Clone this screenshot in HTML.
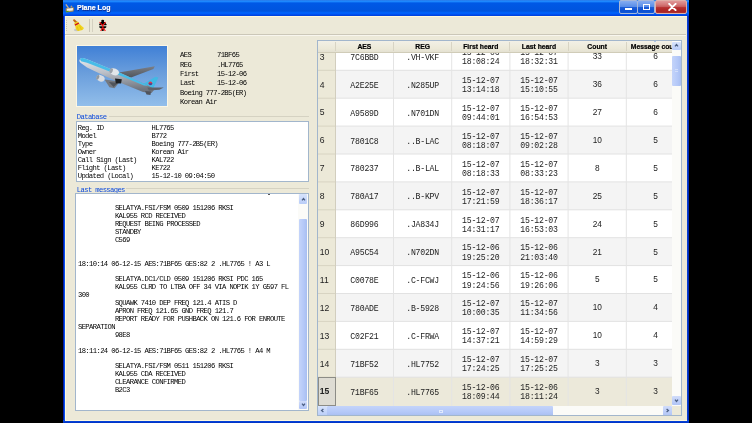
<!DOCTYPE html>
<html><head><meta charset="utf-8"><style>
*{box-sizing:border-box}
html,body{margin:0;padding:0}
body{width:752px;height:423px;background:#000;position:relative;overflow:hidden;-webkit-font-smoothing:antialiased;font-family:"Liberation Sans",sans-serif}
.a{position:absolute}
.mono{font-family:"Liberation Mono",monospace}
.info{font-size:7.2px;letter-spacing:-0.62px;color:#000;white-space:pre;line-height:9.35px}
.db{font-size:7.2px;letter-spacing:-0.62px;color:#000;white-space:pre;line-height:7.95px}
.msg{font-size:7.2px;letter-spacing:-0.62px;color:#000;white-space:pre;line-height:7.9px}
.hdr{font-weight:bold;font-size:6.8px;color:#000;-webkit-text-stroke:0.2px #000;text-align:center;line-height:12px}
.cell{font-size:8.2px;letter-spacing:-0.24px;color:#1c1c1c;text-align:center;white-space:pre}
.num{font-size:8.3px;color:#222;text-align:center}
.rh{font-size:8.6px;color:#222}
</style></head><body><div style="position:absolute;left:0;top:0;width:752px;height:423px;will-change:transform;background:transparent">

<div class="a" style="left:63px;top:0;width:626px;height:423px;background:linear-gradient(90deg,#0018A0 0px,#0020B0 0.8px,#0850F0 1.2px,#0850F0 623.5px,#0020A8 626px)"></div>
<div class="a" style="left:63px;top:420px;width:626px;height:3px;background:linear-gradient(#0A52EC,#0030C0)"></div>
<div class="a" style="left:63px;top:0;width:626px;height:16px;background:linear-gradient(#2B7BE9 0px,#1C88FF 1.6px,#0058E6 3px,#0054DE 11px,#0066FF 13px,#0048E8 15px,#0040D8 16px)"></div>
<svg class="a" style="left:65px;top:3.6px" width="10" height="9" viewBox="0 0 10 9">
<path d="M1.2 0.8 L3.2 3.6" stroke="#C8B088" stroke-width="1.3" stroke-linecap="round"/>
<path d="M5.5 2 L7 1.6 L7.5 3.4 L5.8 3.6 Z" fill="#A89880"/>
<path d="M0.8 4.2 L8.6 3.3 L9.2 5 L8.4 7.6 L1.4 8.5 L0.6 7 Z" fill="#A88850"/>
<path d="M1.8 4.7 L8 4.1 L7.8 6.4 L2 6.9 Z" fill="#F2F0E6"/>
<path d="M1 6.9 L3.6 6.7 L3.4 7.9 L1.3 8.1 Z" fill="#40A020"/>
</svg>
<div class="a" style="left:77px;top:3.1px;font-size:7px;font-weight:bold;color:#fff;line-height:10px;-webkit-text-stroke:0.2px #fff;text-shadow:0.5px 0.5px 0 #0a2a90">Plane Log</div>
<div class="a" style="left:618.6px;top:0px;width:19.2px;height:13.6px;border-radius:2px;background:linear-gradient(#86ACF0 0%,#6E9CEC 25%,#5A8EE8 46%,#1E5ED8 52%,#0C50D2 80%,#1058D8 100%);border:1px solid #A8B8D8"><div class="a" style="left:5px;top:7.2px;width:7.4px;height:2.3px;background:#fff"></div></div>
<div class="a" style="left:637.4px;top:0px;width:18px;height:13.6px;border-radius:2px;background:linear-gradient(#86ACF0 0%,#6E9CEC 25%,#5A8EE8 46%,#1E5ED8 52%,#0C50D2 80%,#1058D8 100%);border:1px solid #A8B8D8"><div class="a" style="left:4.6px;top:2.7px;width:7.3px;height:6.4px;border:1.2px solid #fff;border-top-width:1.8px"></div></div>
<div class="a" style="left:655.3px;top:0px;width:32.1px;height:13.6px;border-radius:2px;background:linear-gradient(#E09898 0%,#D47878 30%,#C86060 46%,#B83030 55%,#A82424 85%,#B03030 100%);border:1px solid #E0B0A8"><svg class="a" style="left:11.6px;top:1.8px" width="9" height="8" viewBox="0 0 9 8"><path d="M1.2 0.9 L7.6 7.1 M7.6 0.9 L1.2 7.1" stroke="#fff" stroke-width="2" stroke-linecap="round"/></svg></div>
<div class="a" style="left:65px;top:16px;width:622px;height:405px;background:#ECE9D8;border-left:1.5px solid #FFF8E0;border-top:1px solid #FFF8DC;border-bottom:1.5px solid #FFF8DC"></div>
<div class="a" style="left:65px;top:34px;width:621px;height:1px;background:#CBC7B8"></div>
<div class="a" style="left:66.3px;top:20px;width:1px;height:12px;background:repeating-linear-gradient(#C8C4B2 0px,#C8C4B2 1px,transparent 1px,transparent 2px)"></div>
<div class="a" style="left:66px;top:35px;width:620px;height:1px;background:#F8F6EE"></div>
<div class="a" style="left:89px;top:19px;width:1px;height:13px;background:#CAC6B6"></div>
<div class="a" style="left:92px;top:19px;width:1px;height:13px;background:#D4D0C0"></div>
<svg class="a" style="left:72px;top:18px" width="14" height="15" viewBox="0 0 14 15">
<ellipse cx="4.6" cy="12" rx="2.6" ry="1.3" fill="#B4B8C4" opacity="0.7"/>
<path d="M2.1 2.2 L4.4 4.5" stroke="#C06A18" stroke-width="2" stroke-linecap="round"/>
<path d="M2 5.1 L5.6 3.5 L7.1 5.1 L3.3 7.3 Z" fill="#F0D020"/>
<path d="M2.5 6.4 L6.5 4.5 L7.3 6 L3.3 7.9 Z" fill="#D01818"/>
<path d="M3.3 7.7 L7.3 5.8 L9.4 7.7 L12 10 L10.5 11.9 L6.3 13 L4.8 12.6 L3.7 10.4 Z" fill="#F2D41E"/>
<path d="M5.2 8.6 L6.4 12.4 M7.6 7.6 L9.4 11.8" stroke="#D8B010" stroke-width="0.5"/>
</svg>
<svg class="a" style="left:97px;top:19px" width="11" height="13" viewBox="0 0 11 13">
<ellipse cx="5.7" cy="2" rx="1.5" ry="1.2" fill="#000"/>
<path d="M3.6 3 L7.8 3 L9.4 5.2 L9.4 6.3 L2.2 6.3 L2.2 5.2 Z" fill="#000"/>
<path d="M2.2 7.3 L9.4 7.3 L9.2 8.6 L7.5 9.5 L4 9.5 L2.4 8.6 Z" fill="#000"/>
<ellipse cx="5.7" cy="10.8" rx="1.3" ry="1.3" fill="#000"/>
<path d="M2.6 3 L5.7 6.6 L8.6 3 M5.9 6.2 L5.9 8.8 L3.6 11.8 M5.9 8.8 L8.4 11.8" stroke="#FF1414" stroke-width="1.1" fill="none" stroke-linejoin="round"/>
</svg>
<div class="a" style="left:76px;top:45px;width:92px;height:62px;background:#FBF6E4"></div>
<svg class="a" style="left:77px;top:46px" width="90" height="60" viewBox="0 0 90 60">
<defs><linearGradient id="sky" x1="0" y1="0" x2="0" y2="1"><stop offset="0" stop-color="#4080D6"/><stop offset="0.45" stop-color="#6A9EDC"/><stop offset="1" stop-color="#92BEEA"/></linearGradient>
<linearGradient id="fus" x1="0" y1="0" x2="0.15" y2="1"><stop offset="0" stop-color="#E8EAEE"/><stop offset="0.45" stop-color="#BCC0C8"/><stop offset="1" stop-color="#6E747E"/></linearGradient>
<linearGradient id="wg" x1="0" y1="0" x2="0" y2="1"><stop offset="0" stop-color="#7C8088"/><stop offset="1" stop-color="#4C5058"/></linearGradient></defs>
<rect width="90" height="60" fill="url(#sky)"/>
<path d="M42 26.6 L77.8 20.2 L76.4 23 L52 32.2 L45 32.5 Z" fill="url(#wg)"/>
<path d="M64.6 39 L78.4 30.8 L81.4 31.6 L76 43 Z" fill="#42B8E4"/>
<path d="M2.4 14.3 C3 12.8 4 12.1 5.5 12.1 L10 13.3 L30 21.6 L44 27.3 L69 38.6 L75 41.8 L77 44 L74.5 47 L66 46 L44 37 L30 31 L10 21.6 L4.5 17.6 C3 16.6 2.2 15.4 2.4 14.3 Z" fill="url(#fus)"/>
<path d="M3 13.2 C4.2 12 5 12 6 12.1 L10 13.3 L30 21.6 L44 27.3 L69 38.6 L71 39.8 L67 39.6 L44 30 L30 24.6 L10 16.8 L4 15.2 Z" fill="#48BCE8"/>
<circle cx="73.4" cy="37.3" r="1.9" fill="#E03848"/>
<path d="M71.6 37.6 A1.9 1.9 0 0 0 75.3 37.3 Z" fill="#2848A8"/>
<path d="M70.3 41.5 L86.7 41.5 L82.5 43.8 L72 44.4 Z" fill="#5E626A"/>
<path d="M68 45 L74 45.6 L73.5 49 L69.5 48.5 Z" fill="#50545C"/>
<path d="M27.5 33.5 L43 35.4 L37.5 42.2 L32.5 41.2 Z" fill="#74787F"/>
<path d="M32 36 L41 37 L36.5 41 Z" fill="#50545A"/>
<ellipse cx="37.4" cy="25.8" rx="4.8" ry="3.4" transform="rotate(22 37.4 25.8)" fill="#E2E6EA"/>
<ellipse cx="34.2" cy="24.7" rx="1.6" ry="2.6" transform="rotate(22 34.2 24.7)" fill="#9CA2AA"/>
<ellipse cx="23.6" cy="32.3" rx="4.2" ry="3.1" transform="rotate(22 23.6 32.3)" fill="#D8DCE2"/>
<ellipse cx="20.8" cy="31.3" rx="1.4" ry="2.4" transform="rotate(22 20.8 31.3)" fill="#9098A0"/>
<path d="M38 32.6 L44.8 33.2 L44 37.6 L38.8 37.2 Z" fill="#1C2024"/>
</svg>
<div class="a mono info" style="left:180px;top:51.2px">AES       71BF65
REG       .HL7765
First     15-12-06
Last      15-12-06
Boeing 777-2B5(ER)
Korean Air</div>
<div class="a mono" style="left:76.8px;top:113.2px;font-size:7.2px;color:#0C4ADC;letter-spacing:-0.62px;line-height:9px">Database</div>
<div class="a" style="left:109px;top:116px;width:200px;height:1px;background:#D5D2C2"></div>
<div class="a" style="left:75.5px;top:121px;width:233.5px;height:61px;background:#fff;border:1px solid #A2B6CC"></div>
<div class="a mono db" style="left:77.7px;top:125.2px">Reg. ID             HL7765
Model               B772
Type                Boeing 777-2B5(ER)
Owner               Korean Air
Call Sign (Last)    KAL722
Flight (Last)       KE722
Updated (Local)     15-12-10 09:04:50</div>
<div class="a mono" style="left:76.8px;top:186px;font-size:7.2px;color:#0C4ADC;letter-spacing:-0.62px;line-height:9px">Last messages</div>
<div class="a" style="left:126px;top:188px;width:183px;height:1px;background:#D5D2C2"></div>
<div class="a" style="left:75.3px;top:193.2px;width:233.5px;height:217.8px;background:#fff;border:1px solid #A2B6CC;overflow:hidden">
<div class="a mono msg" style="left:1.7px;top:3.2px">
          SELATYA.FSI/FSM 0509 151206 RKSI
          KAL955 RCD RECEIVED
          REQUEST BEING PROCESSED
          STANDBY
          C569


18:10:14 06-12-15 AES:71BF65 GES:82 2 .HL7765 ! A3 L

          SELATYA.DC1/CLD 0509 151206 RKSI PDC 165
          KAL955 CLRD TO LTBA OFF 34 VIA NOPIK 1Y G597 FL
300
          SQUAWK 7410 DEP FREQ 121.4 ATIS D
          APRON FREQ 121.65 GND FREQ 121.7
          REPORT READY FOR PUSHBACK ON 121.6 FOR ENROUTE
SEPARATION
          98E8

18:11:24 06-12-15 AES:71BF65 GES:82 2 .HL7765 ! A4 M

          SELATYA.FSI/FSM 0511 151206 RKSI
          KAL955 CDA RECEIVED
          CLEARANCE CONFIRMED
          B2C3</div>
<div class="a" style="left:222px;top:0;width:9.5px;height:215.8px;background:#FBFBF8"></div>
<div class="a" style="left:222.7px;top:0.2px;width:8.5px;height:9.5px;background:linear-gradient(#D8E4FC,#B8CCF8);border-radius:1px"></div>
<div class="a" style="left:222.7px;top:24.4px;width:8.5px;height:182.5px;background:linear-gradient(90deg,#C4D4FA,#B4C8F8 60%,#A8BEF0);border-radius:1px"></div>
<div class="a" style="left:222.7px;top:206.6px;width:8.5px;height:8.5px;background:linear-gradient(#D0DCFA,#B0C4F6);border-radius:1px"></div>
</div>
<div class="a" style="left:267.5px;top:193.5px;width:2px;height:1px;background:#555"></div>
<div class="a" style="left:317px;top:40px;width:365px;height:376px;background:#fff;border:1px solid #A2B6CC;overflow:hidden">
<div class="a" style="left:17.3px;top:1.4px;width:400px;height:28.4px;background:#FFFFFF"></div>
<div class="a" style="left:0;top:1.4px;width:17.3px;height:28.4px;background:#ECE9D8"></div>
<div class="a" style="left:17.3px;top:29.3px;width:400px;height:28.4px;background:#F4F4F4"></div>
<div class="a" style="left:0;top:29.3px;width:17.3px;height:28.4px;background:#ECE9D8"></div>
<div class="a" style="left:17.3px;top:57.2px;width:400px;height:28.4px;background:#FFFFFF"></div>
<div class="a" style="left:0;top:57.2px;width:17.3px;height:28.4px;background:#ECE9D8"></div>
<div class="a" style="left:17.3px;top:85.1px;width:400px;height:28.4px;background:#F4F4F4"></div>
<div class="a" style="left:0;top:85.1px;width:17.3px;height:28.4px;background:#ECE9D8"></div>
<div class="a" style="left:17.3px;top:113.0px;width:400px;height:28.4px;background:#FFFFFF"></div>
<div class="a" style="left:0;top:113.0px;width:17.3px;height:28.4px;background:#ECE9D8"></div>
<div class="a" style="left:17.3px;top:140.9px;width:400px;height:28.4px;background:#F4F4F4"></div>
<div class="a" style="left:0;top:140.9px;width:17.3px;height:28.4px;background:#ECE9D8"></div>
<div class="a" style="left:17.3px;top:168.8px;width:400px;height:28.4px;background:#FFFFFF"></div>
<div class="a" style="left:0;top:168.8px;width:17.3px;height:28.4px;background:#ECE9D8"></div>
<div class="a" style="left:17.3px;top:196.7px;width:400px;height:28.4px;background:#F4F4F4"></div>
<div class="a" style="left:0;top:196.7px;width:17.3px;height:28.4px;background:#ECE9D8"></div>
<div class="a" style="left:17.3px;top:224.6px;width:400px;height:28.4px;background:#FFFFFF"></div>
<div class="a" style="left:0;top:224.6px;width:17.3px;height:28.4px;background:#ECE9D8"></div>
<div class="a" style="left:17.3px;top:252.5px;width:400px;height:28.4px;background:#F4F4F4"></div>
<div class="a" style="left:0;top:252.5px;width:17.3px;height:28.4px;background:#ECE9D8"></div>
<div class="a" style="left:17.3px;top:280.4px;width:400px;height:28.4px;background:#FFFFFF"></div>
<div class="a" style="left:0;top:280.4px;width:17.3px;height:28.4px;background:#ECE9D8"></div>
<div class="a" style="left:17.3px;top:308.3px;width:400px;height:28.4px;background:#F4F4F4"></div>
<div class="a" style="left:0;top:308.3px;width:17.3px;height:28.4px;background:#ECE9D8"></div>
<div class="a" style="left:17.3px;top:336.2px;width:400px;height:28.4px;background:#ECE9DA"></div>
<div class="a" style="left:0;top:336.2px;width:17.3px;height:28.4px;background:#ECE9D8"></div>
<svg class="a" style="left:0;top:0" width="363" height="374" viewBox="0 0 363 374"><line x1="17.3" y1="29.30" x2="363" y2="29.30" stroke="#E2E2E2" stroke-width="1"/><line x1="0" y1="29.30" x2="17.3" y2="29.30" stroke="#D8D4C2" stroke-width="1"/><line x1="17.3" y1="57.20" x2="363" y2="57.20" stroke="#E2E2E2" stroke-width="1"/><line x1="0" y1="57.20" x2="17.3" y2="57.20" stroke="#D8D4C2" stroke-width="1"/><line x1="17.3" y1="85.10" x2="363" y2="85.10" stroke="#E2E2E2" stroke-width="1"/><line x1="0" y1="85.10" x2="17.3" y2="85.10" stroke="#D8D4C2" stroke-width="1"/><line x1="17.3" y1="113.00" x2="363" y2="113.00" stroke="#E2E2E2" stroke-width="1"/><line x1="0" y1="113.00" x2="17.3" y2="113.00" stroke="#D8D4C2" stroke-width="1"/><line x1="17.3" y1="140.90" x2="363" y2="140.90" stroke="#E2E2E2" stroke-width="1"/><line x1="0" y1="140.90" x2="17.3" y2="140.90" stroke="#D8D4C2" stroke-width="1"/><line x1="17.3" y1="168.80" x2="363" y2="168.80" stroke="#E2E2E2" stroke-width="1"/><line x1="0" y1="168.80" x2="17.3" y2="168.80" stroke="#D8D4C2" stroke-width="1"/><line x1="17.3" y1="196.70" x2="363" y2="196.70" stroke="#E2E2E2" stroke-width="1"/><line x1="0" y1="196.70" x2="17.3" y2="196.70" stroke="#D8D4C2" stroke-width="1"/><line x1="17.3" y1="224.60" x2="363" y2="224.60" stroke="#E2E2E2" stroke-width="1"/><line x1="0" y1="224.60" x2="17.3" y2="224.60" stroke="#D8D4C2" stroke-width="1"/><line x1="17.3" y1="252.50" x2="363" y2="252.50" stroke="#E2E2E2" stroke-width="1"/><line x1="0" y1="252.50" x2="17.3" y2="252.50" stroke="#D8D4C2" stroke-width="1"/><line x1="17.3" y1="280.40" x2="363" y2="280.40" stroke="#E2E2E2" stroke-width="1"/><line x1="0" y1="280.40" x2="17.3" y2="280.40" stroke="#D8D4C2" stroke-width="1"/><line x1="17.3" y1="308.30" x2="363" y2="308.30" stroke="#E2E2E2" stroke-width="1"/><line x1="0" y1="308.30" x2="17.3" y2="308.30" stroke="#D8D4C2" stroke-width="1"/><line x1="17.3" y1="336.20" x2="363" y2="336.20" stroke="#E2E2E2" stroke-width="1"/><line x1="0" y1="336.20" x2="17.3" y2="336.20" stroke="#D8D4C2" stroke-width="1"/><line x1="0" y1="364.10" x2="17.3" y2="364.10" stroke="#D8D4C2" stroke-width="1"/><line x1="75.50" y1="0" x2="75.50" y2="374" stroke="#E4E4E4" stroke-width="1"/><line x1="133.70" y1="0" x2="133.70" y2="374" stroke="#E4E4E4" stroke-width="1"/><line x1="191.90" y1="0" x2="191.90" y2="374" stroke="#E4E4E4" stroke-width="1"/><line x1="250.10" y1="0" x2="250.10" y2="374" stroke="#E4E4E4" stroke-width="1"/><line x1="308.30" y1="0" x2="308.30" y2="374" stroke="#E4E4E4" stroke-width="1"/><line x1="17.50" y1="0" x2="17.50" y2="374" stroke="#D2CEBE" stroke-width="1"/></svg>
<div class="a" style="left:0;top:336.2px;width:18.0px;height:28.5px;background:#DEDCD3;border:1px solid #8C8C86"></div>
<div class="a rh" style="left:1.8px;top:10.65px;line-height:10px;font-weight:normal">3</div>
<div class="a mono cell" style="left:17.3px;top:11.85px;width:58.2px;line-height:10px">7C6BBD</div>
<div class="a mono cell" style="left:75.5px;top:11.85px;width:58.2px;line-height:10px">.VH-VKF</div>
<div class="a mono cell" style="left:133.7px;top:7.15px;width:58.2px;line-height:9.2px">15-12-06<br>18:08:24</div>
<div class="a mono cell" style="left:191.9px;top:7.15px;width:58.2px;line-height:9.2px">15-12-07<br>18:32:31</div>
<div class="a num" style="left:250.2px;top:10.25px;width:58.2px;line-height:10px">33</div>
<div class="a num" style="left:308.4px;top:10.25px;width:58.2px;line-height:10px">6</div>
<div class="a rh" style="left:1.8px;top:38.55px;line-height:10px;font-weight:normal">4</div>
<div class="a mono cell" style="left:17.3px;top:39.75px;width:58.2px;line-height:10px">A2E25E</div>
<div class="a mono cell" style="left:75.5px;top:39.75px;width:58.2px;line-height:10px">.N285UP</div>
<div class="a mono cell" style="left:133.7px;top:35.05px;width:58.2px;line-height:9.2px">15-12-07<br>13:14:18</div>
<div class="a mono cell" style="left:191.9px;top:35.05px;width:58.2px;line-height:9.2px">15-12-07<br>15:10:55</div>
<div class="a num" style="left:250.2px;top:38.15px;width:58.2px;line-height:10px">36</div>
<div class="a num" style="left:308.4px;top:38.15px;width:58.2px;line-height:10px">6</div>
<div class="a rh" style="left:1.8px;top:66.45px;line-height:10px;font-weight:normal">5</div>
<div class="a mono cell" style="left:17.3px;top:67.65px;width:58.2px;line-height:10px">A9589D</div>
<div class="a mono cell" style="left:75.5px;top:67.65px;width:58.2px;line-height:10px">.N701DN</div>
<div class="a mono cell" style="left:133.7px;top:62.95px;width:58.2px;line-height:9.2px">15-12-07<br>09:44:01</div>
<div class="a mono cell" style="left:191.9px;top:62.95px;width:58.2px;line-height:9.2px">15-12-07<br>16:54:53</div>
<div class="a num" style="left:250.2px;top:66.05px;width:58.2px;line-height:10px">27</div>
<div class="a num" style="left:308.4px;top:66.05px;width:58.2px;line-height:10px">6</div>
<div class="a rh" style="left:1.8px;top:94.35px;line-height:10px;font-weight:normal">6</div>
<div class="a mono cell" style="left:17.3px;top:95.55px;width:58.2px;line-height:10px">7801C8</div>
<div class="a mono cell" style="left:75.5px;top:95.55px;width:58.2px;line-height:10px">..B-LAC</div>
<div class="a mono cell" style="left:133.7px;top:90.85px;width:58.2px;line-height:9.2px">15-12-07<br>08:18:07</div>
<div class="a mono cell" style="left:191.9px;top:90.85px;width:58.2px;line-height:9.2px">15-12-07<br>09:02:28</div>
<div class="a num" style="left:250.2px;top:93.95px;width:58.2px;line-height:10px">10</div>
<div class="a num" style="left:308.4px;top:93.95px;width:58.2px;line-height:10px">5</div>
<div class="a rh" style="left:1.8px;top:122.25px;line-height:10px;font-weight:normal">7</div>
<div class="a mono cell" style="left:17.3px;top:123.45px;width:58.2px;line-height:10px">780237</div>
<div class="a mono cell" style="left:75.5px;top:123.45px;width:58.2px;line-height:10px">..B-LAL</div>
<div class="a mono cell" style="left:133.7px;top:118.75px;width:58.2px;line-height:9.2px">15-12-07<br>08:18:33</div>
<div class="a mono cell" style="left:191.9px;top:118.75px;width:58.2px;line-height:9.2px">15-12-07<br>08:33:23</div>
<div class="a num" style="left:250.2px;top:121.85px;width:58.2px;line-height:10px">8</div>
<div class="a num" style="left:308.4px;top:121.85px;width:58.2px;line-height:10px">5</div>
<div class="a rh" style="left:1.8px;top:150.15px;line-height:10px;font-weight:normal">8</div>
<div class="a mono cell" style="left:17.3px;top:151.35px;width:58.2px;line-height:10px">780A17</div>
<div class="a mono cell" style="left:75.5px;top:151.35px;width:58.2px;line-height:10px">..B-KPV</div>
<div class="a mono cell" style="left:133.7px;top:146.65px;width:58.2px;line-height:9.2px">15-12-07<br>17:21:59</div>
<div class="a mono cell" style="left:191.9px;top:146.65px;width:58.2px;line-height:9.2px">15-12-07<br>18:36:17</div>
<div class="a num" style="left:250.2px;top:149.75px;width:58.2px;line-height:10px">25</div>
<div class="a num" style="left:308.4px;top:149.75px;width:58.2px;line-height:10px">5</div>
<div class="a rh" style="left:1.8px;top:178.05px;line-height:10px;font-weight:normal">9</div>
<div class="a mono cell" style="left:17.3px;top:179.25px;width:58.2px;line-height:10px">86D996</div>
<div class="a mono cell" style="left:75.5px;top:179.25px;width:58.2px;line-height:10px">.JA834J</div>
<div class="a mono cell" style="left:133.7px;top:174.55px;width:58.2px;line-height:9.2px">15-12-07<br>14:31:17</div>
<div class="a mono cell" style="left:191.9px;top:174.55px;width:58.2px;line-height:9.2px">15-12-07<br>16:53:03</div>
<div class="a num" style="left:250.2px;top:177.65px;width:58.2px;line-height:10px">24</div>
<div class="a num" style="left:308.4px;top:177.65px;width:58.2px;line-height:10px">5</div>
<div class="a rh" style="left:1.8px;top:205.95px;line-height:10px;font-weight:normal">10</div>
<div class="a mono cell" style="left:17.3px;top:207.15px;width:58.2px;line-height:10px">A95C54</div>
<div class="a mono cell" style="left:75.5px;top:207.15px;width:58.2px;line-height:10px">.N702DN</div>
<div class="a mono cell" style="left:133.7px;top:202.45px;width:58.2px;line-height:9.2px">15-12-06<br>19:25:20</div>
<div class="a mono cell" style="left:191.9px;top:202.45px;width:58.2px;line-height:9.2px">15-12-06<br>21:03:40</div>
<div class="a num" style="left:250.2px;top:205.55px;width:58.2px;line-height:10px">21</div>
<div class="a num" style="left:308.4px;top:205.55px;width:58.2px;line-height:10px">5</div>
<div class="a rh" style="left:1.8px;top:233.85px;line-height:10px;font-weight:normal">11</div>
<div class="a mono cell" style="left:17.3px;top:235.05px;width:58.2px;line-height:10px">C0078E</div>
<div class="a mono cell" style="left:75.5px;top:235.05px;width:58.2px;line-height:10px">.C-FCWJ</div>
<div class="a mono cell" style="left:133.7px;top:230.35px;width:58.2px;line-height:9.2px">15-12-06<br>19:24:56</div>
<div class="a mono cell" style="left:191.9px;top:230.35px;width:58.2px;line-height:9.2px">15-12-06<br>19:26:06</div>
<div class="a num" style="left:250.2px;top:233.45px;width:58.2px;line-height:10px">5</div>
<div class="a num" style="left:308.4px;top:233.45px;width:58.2px;line-height:10px">5</div>
<div class="a rh" style="left:1.8px;top:261.75px;line-height:10px;font-weight:normal">12</div>
<div class="a mono cell" style="left:17.3px;top:262.95px;width:58.2px;line-height:10px">780ADE</div>
<div class="a mono cell" style="left:75.5px;top:262.95px;width:58.2px;line-height:10px">.B-5928</div>
<div class="a mono cell" style="left:133.7px;top:258.25px;width:58.2px;line-height:9.2px">15-12-07<br>10:00:35</div>
<div class="a mono cell" style="left:191.9px;top:258.25px;width:58.2px;line-height:9.2px">15-12-07<br>11:34:56</div>
<div class="a num" style="left:250.2px;top:261.35px;width:58.2px;line-height:10px">10</div>
<div class="a num" style="left:308.4px;top:261.35px;width:58.2px;line-height:10px">4</div>
<div class="a rh" style="left:1.8px;top:289.65px;line-height:10px;font-weight:normal">13</div>
<div class="a mono cell" style="left:17.3px;top:290.85px;width:58.2px;line-height:10px">C02F21</div>
<div class="a mono cell" style="left:75.5px;top:290.85px;width:58.2px;line-height:10px">.C-FRWA</div>
<div class="a mono cell" style="left:133.7px;top:286.15px;width:58.2px;line-height:9.2px">15-12-07<br>14:37:21</div>
<div class="a mono cell" style="left:191.9px;top:286.15px;width:58.2px;line-height:9.2px">15-12-07<br>14:59:29</div>
<div class="a num" style="left:250.2px;top:289.25px;width:58.2px;line-height:10px">10</div>
<div class="a num" style="left:308.4px;top:289.25px;width:58.2px;line-height:10px">4</div>
<div class="a rh" style="left:1.8px;top:317.55px;line-height:10px;font-weight:normal">14</div>
<div class="a mono cell" style="left:17.3px;top:318.75px;width:58.2px;line-height:10px">71BF52</div>
<div class="a mono cell" style="left:75.5px;top:318.75px;width:58.2px;line-height:10px">.HL7752</div>
<div class="a mono cell" style="left:133.7px;top:314.05px;width:58.2px;line-height:9.2px">15-12-07<br>17:24:25</div>
<div class="a mono cell" style="left:191.9px;top:314.05px;width:58.2px;line-height:9.2px">15-12-07<br>17:25:25</div>
<div class="a num" style="left:250.2px;top:317.15px;width:58.2px;line-height:10px">3</div>
<div class="a num" style="left:308.4px;top:317.15px;width:58.2px;line-height:10px">3</div>
<div class="a rh" style="left:1.8px;top:345.45px;line-height:10px;font-weight:bold">15</div>
<div class="a mono cell" style="left:17.3px;top:346.65px;width:58.2px;line-height:10px">71BF65</div>
<div class="a mono cell" style="left:75.5px;top:346.65px;width:58.2px;line-height:10px">.HL7765</div>
<div class="a mono cell" style="left:133.7px;top:341.95px;width:58.2px;line-height:9.2px">15-12-06<br>18:09:44</div>
<div class="a mono cell" style="left:191.9px;top:341.95px;width:58.2px;line-height:9.2px">15-12-06<br>18:11:24</div>
<div class="a num" style="left:250.2px;top:345.05px;width:58.2px;line-height:10px">3</div>
<div class="a num" style="left:308.4px;top:345.05px;width:58.2px;line-height:10px">3</div>
<div class="a" style="left:0;top:0;width:400px;height:11.5px;background:linear-gradient(#F2F0E6,#ECE9D8 70%,#E4E1D2);border-bottom:1px solid #D0CCB8"></div>
<div class="a" style="left:16.7px;top:0.8px;width:1px;height:9.5px;background:#D8D4C4"></div>
<div class="a hdr" style="left:17.3px;top:0.1px;width:58.2px;white-space:nowrap;overflow:hidden">AES</div>
<div class="a" style="left:74.9px;top:0.8px;width:1px;height:9.5px;background:#D8D4C4"></div>
<div class="a hdr" style="left:75.5px;top:0.1px;width:58.2px;white-space:nowrap;overflow:hidden">REG</div>
<div class="a" style="left:133.1px;top:0.8px;width:1px;height:9.5px;background:#D8D4C4"></div>
<div class="a hdr" style="left:133.7px;top:0.1px;width:58.2px;white-space:nowrap;overflow:hidden">First heard</div>
<div class="a" style="left:191.3px;top:0.8px;width:1px;height:9.5px;background:#D8D4C4"></div>
<div class="a hdr" style="left:191.9px;top:0.1px;width:58.2px;white-space:nowrap;overflow:hidden">Last heard</div>
<div class="a" style="left:249.5px;top:0.8px;width:1px;height:9.5px;background:#D8D4C4"></div>
<div class="a hdr" style="left:250.1px;top:0.1px;width:58.2px;white-space:nowrap;overflow:hidden">Count</div>
<div class="a" style="left:307.7px;top:0.8px;width:1px;height:9.5px;background:#D8D4C4"></div>
<div class="a hdr" style="left:308.3px;top:0.1px;width:58.2px;white-space:nowrap;overflow:hidden">Message count</div>
<div class="a" style="left:335.5px;top:-0.5px;width:0;height:0;border-left:1.5px solid transparent;border-right:1.5px solid transparent;border-top:1.5px solid #6EA0E8"></div>
<div class="a" style="left:354.4px;top:0px;width:8.600000000000023px;height:364.5px;background:#FBFBF8"></div>
<div class="a" style="left:354.4px;top:0.6px;width:8.600000000000023px;height:8.6px;background:linear-gradient(#D8E4FC,#B8CCF8);border-radius:1px"></div>
<div class="a" style="left:354.4px;top:14.7px;width:8.600000000000023px;height:30px;background:linear-gradient(90deg,#C4D4FA,#B4C8F8 60%,#A8BEF0);border-radius:1px"></div>
<div class="a" style="left:356.9px;top:27.5px;width:3.5px;height:3px;border-top:1px solid #D2DEFA;border-bottom:1px solid #D2DEFA"></div>
<div class="a" style="left:354.4px;top:355px;width:8.600000000000023px;height:8.6px;background:linear-gradient(#D0DCFA,#B0C4F6);border-radius:1px"></div>
<div class="a" style="left:0;top:364.7px;width:400px;height:10.300000000000011px;background:#FBFBF8"></div>
<div class="a" style="left:0;top:365px;width:9px;height:9.5px;background:linear-gradient(#D8E4FC,#B8CCF8);border-radius:1px"></div>
<div class="a" style="left:9px;top:365px;width:226px;height:9.5px;background:linear-gradient(#C4D4FA,#B4C8F8 60%,#A8BEF0);border-radius:1px"></div>
<div class="a" style="left:120.5px;top:368.6px;width:4.5px;height:3.2px;border:1px solid #E4ECFC;opacity:0.9"></div>
<div class="a" style="left:344.5px;top:365px;width:9.5px;height:9.5px;background:linear-gradient(#D0DCFA,#B0C4F6);border-radius:1px"></div>
<div class="a" style="left:354.4px;top:364.5px;width:8.600000000000023px;height:11px;background:#ECE9D8"></div>
</div>
<svg class="a" style="left:300.9px;top:196.6px" width="5" height="5" viewBox="0 0 5 5"><path d="M1 3.4 L2.5 1.6 L4 3.4" stroke="#4D6185" stroke-width="1.3" fill="none"/></svg>
<svg class="a" style="left:300.9px;top:402.2px" width="5" height="5" viewBox="0 0 5 5"><path d="M1 1.6 L2.5 3.4 L4 1.6" stroke="#4D6185" stroke-width="1.3" fill="none"/></svg>
<svg class="a" style="left:674.2px;top:43.2px" width="5" height="5" viewBox="0 0 5 5"><path d="M1 3.4 L2.5 1.6 L4 3.4" stroke="#4D6185" stroke-width="1.3" fill="none"/></svg>
<svg class="a" style="left:674.2px;top:398.4px" width="5" height="5" viewBox="0 0 5 5"><path d="M1 1.6 L2.5 3.4 L4 1.6" stroke="#4D6185" stroke-width="1.3" fill="none"/></svg>
<svg class="a" style="left:319.8px;top:408.2px" width="5" height="5" viewBox="0 0 5 5"><path d="M3.4 1 L1.6 2.5 L3.4 4" stroke="#4D6185" stroke-width="1.3" fill="none"/></svg>
<svg class="a" style="left:664.8px;top:408.2px" width="5" height="5" viewBox="0 0 5 5"><path d="M1.6 1 L3.4 2.5 L1.6 4" stroke="#4D6185" stroke-width="1.3" fill="none"/></svg>
</div></body></html>
